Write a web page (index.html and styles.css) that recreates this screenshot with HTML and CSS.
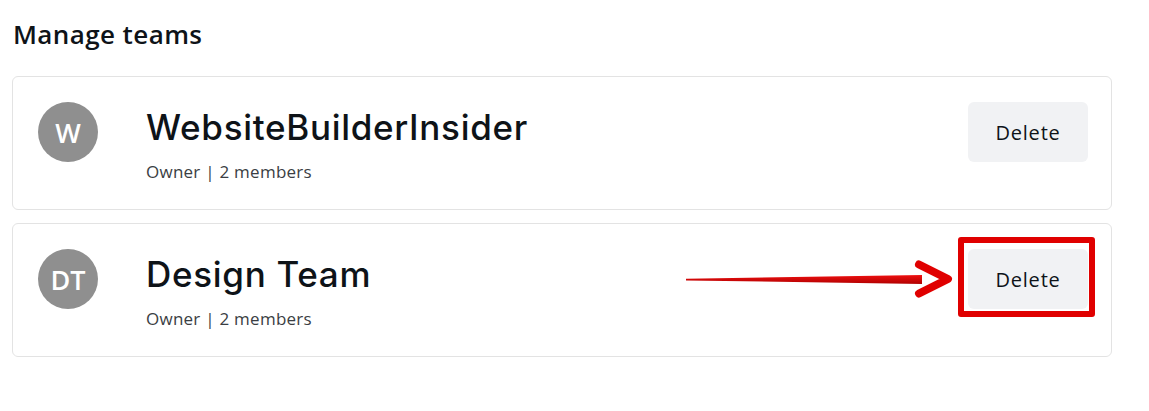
FILE: index.html
```html
<!DOCTYPE html>
<html>
<head>
<meta charset="utf-8">
<link rel="stylesheet" href="styles.css">
</head>
<body>
<div class="page">
  <h1 class="heading">Manage teams</h1>
  <div class="list">
    <div class="card">
      <div class="avatar">W</div>
      <div class="info">
        <div class="title">WebsiteBuilderInsider</div>
        <div class="meta">Owner | 2 members</div>
      </div>
      <button class="btn">Delete</button>
    </div>
    <div class="card">
      <div class="avatar">DT</div>
      <div class="info">
        <div class="title">Design Team</div>
        <div class="meta">Owner | 2 members</div>
      </div>
      <span class="highlight">
        <svg class="arrow" width="280" height="40" viewBox="0 0 280 40">
          <defs>
            <linearGradient id="shaft" x1="0" y1="0" x2="0" y2="1">
              <stop offset="0" stop-color="#f01010"/>
              <stop offset="1" stop-color="#b00000"/>
            </linearGradient>
          </defs>
          <polygon points="2,18.8 2,20.4 238,24 238,15" fill="url(#shaft)"/>
          <polyline points="235,4.5 264,19 235,33.5" fill="none" stroke="#e00000" stroke-width="8" stroke-linecap="round" stroke-linejoin="round"/>
        </svg>
        <button class="btn">Delete</button>
      </span>
    </div>
  </div>
</div>
</body>
</html>
```
FILE: styles.css
```css
* { box-sizing: border-box; }
body {
  margin: 0;
  background: #ffffff;
  font-family: "Open Sans", "Noto Sans", sans-serif;
}
.page {
  padding: 16px 0 0 12px;
  width: 1112px;
}
.heading {
  margin: 0 0 24px 1px;
  font-family: "Open Sans", sans-serif;
  font-weight: 600;
  font-size: 26px;
  line-height: 36px;
  letter-spacing: 0.4px;
  color: #0e1318;
}
.list {
  display: flex;
  flex-direction: column;
  gap: 13px;
}
.card {
  display: flex;
  align-items: flex-start;
  border: 1px solid #e3e3e3;
  border-radius: 6px;
  padding: 25px 23px 24px 25px;
  height: 134px;
}
.avatar {
  width: 60px;
  height: 60px;
  border-radius: 50%;
  background: #8f8f8f;
  color: #ffffff;
  display: flex;
  align-items: center;
  justify-content: center;
  font-family: "Open Sans", sans-serif;
  font-weight: 600;
  font-size: 27px;
  flex: none;
}
.info {
  flex: 1;
  margin-left: 48px;
}
.title {
  font-family: Inter, sans-serif;
  font-weight: 500;
  font-size: 35px;
  line-height: 50px;
  color: #0e1318;
  letter-spacing: 0.7px;
}
.meta {
  margin-top: 8px;
  font-family: "Open Sans", sans-serif;
  font-size: 17px;
  line-height: 24px;
  letter-spacing: 0.25px;
  color: #3a3e43;
}
.btn {
  width: 120px;
  height: 60px;
  border: none;
  border-radius: 6px;
  background: #f1f2f4;
  font-family: "Open Sans", sans-serif;
  font-size: 20px;
  font-weight: 500;
  letter-spacing: 0.8px;
  color: #0e1318;
  flex: none;
}
.highlight {
  position: relative;
  display: block;
  flex: none;
}
.highlight::after {
  content: "";
  position: absolute;
  top: -12px;
  bottom: -8px;
  left: -10px;
  right: -7px;
  border: 6px solid #e00000;
  border-radius: 3px;
}
.arrow {
  position: absolute;
  left: -284px;
  top: 11px;
}
```
